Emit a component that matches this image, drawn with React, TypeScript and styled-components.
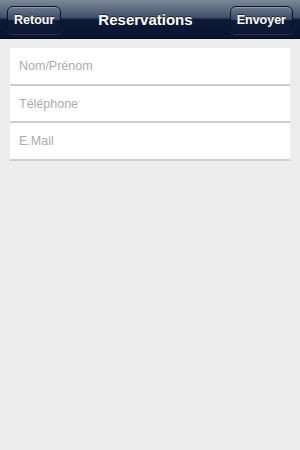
import styled, { createGlobalStyle } from "styled-components"

const Global = createGlobalStyle`
    html, body {
        margin: 0;
        padding: 0;
        background: #ededed;
        font-family: "Liberation Sans", Arial, sans-serif;
    }
`

const Page = styled.div`
    width: 300px;
    height: 450px;
    background: #ededed;
    display: flex;
    flex-direction: column;
`

const Bar = styled.div`
    height: 39px;
    display: flex;
    align-items: center;
    justify-content: space-between;
    padding: 0 7px;
    background: linear-gradient(180deg, #7b879b 0%, #435169 45%, #0e1a35 52%, #091430 100%);
    border-bottom: 1px solid #05091a;
    box-sizing: border-box;
`

const Title = styled.h1`
    margin: 0;
    font-size: 15px;
    font-weight: bold;
    color: #fff;
    text-shadow: 0 -1px 0 rgba(0, 0, 0, 0.6);
`

const BarButton = styled.button`
    height: 28px;
    padding: 0 6px;
    border-radius: 6px;
    border: 1px solid #0a1228;
    background: linear-gradient(180deg, #6d7a90 0%, #3b4862 48%, #111d38 52%, #0c1732 100%);
    box-shadow: inset 0 1px 0 rgba(255, 255, 255, 0.25), 0 1px 0 rgba(255, 255, 255, 0.15);
    color: #fff;
    font-family: "Liberation Sans", Arial, sans-serif;
    font-size: 12.5px;
    font-weight: bold;
    text-shadow: 0 -1px 0 rgba(0, 0, 0, 0.6);
    margin-top: 1px;
`

const Form = styled.div`
    display: flex;
    flex-direction: column;
    padding: 9px 10px 0;
`

const Field = styled.input`
    height: 37.5px;
    box-sizing: border-box;
    border: none;
    border-bottom: 2px solid #cdcdcd;
    background: #fff;
    padding: 1px 9px 0;
    font-family: "Liberation Sans", Arial, sans-serif;
    font-size: 12.5px;
    color: #333;
    outline: none;

    &::placeholder {
        color: #ababab;
    }
`

const App = () => {
    return (
        <Page>
            <Global />
            <Bar>
                <BarButton>Retour</BarButton>
                <Title>Reservations</Title>
                <BarButton>Envoyer</BarButton>
            </Bar>
            <Form>
                {["Nom/Prénom", "Téléphone", "E.Mail"].map((label) => (
                    <Field key={label} placeholder={label} />
                ))}
            </Form>
        </Page>
    )
}

export default App
